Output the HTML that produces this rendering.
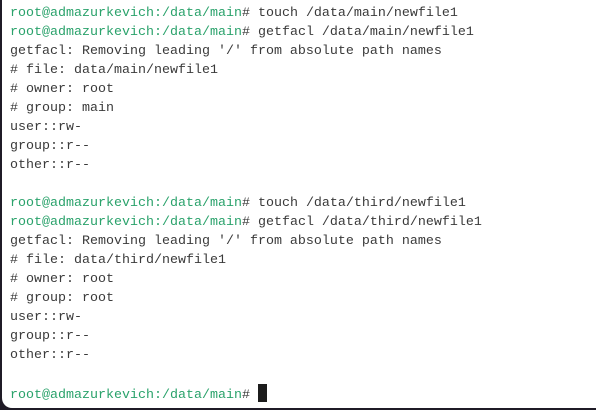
<!DOCTYPE html>
<html><head><meta charset="utf-8"><style>
html,body{margin:0;padding:0;background:#1e1a24;}
.win{position:absolute;left:0;top:0;width:596px;height:410px;background:#1f1b26;}
.term{position:absolute;left:2px;top:0;width:594px;height:408px;background:#fff;border-bottom-left-radius:10px;overflow:hidden;}
pre{margin:0;position:absolute;left:8px;top:4px;font-family:"Liberation Mono",monospace;font-size:13.33px;line-height:19px;color:#3a3a3a;}
.g{color:#2aa26b;}
.c{display:inline-block;width:9px;height:18px;background:#1c1c1c;vertical-align:-4px;}
</style></head><body><div class="win"><div class="term"><pre><span class="g">root@admazurkevich:/data/main</span># touch /data/main/newfile1
<span class="g">root@admazurkevich:/data/main</span># getfacl /data/main/newfile1
getfacl: Removing leading '/' from absolute path names
# file: data/main/newfile1
# owner: root
# group: main
user::rw-
group::r--
other::r--

<span class="g">root@admazurkevich:/data/main</span># touch /data/third/newfile1
<span class="g">root@admazurkevich:/data/main</span># getfacl /data/third/newfile1
getfacl: Removing leading '/' from absolute path names
# file: data/third/newfile1
# owner: root
# group: root
user::rw-
group::r--
other::r--

<span class="g">root@admazurkevich:/data/main</span># <span class="c"></span></pre></div></div></body></html>
